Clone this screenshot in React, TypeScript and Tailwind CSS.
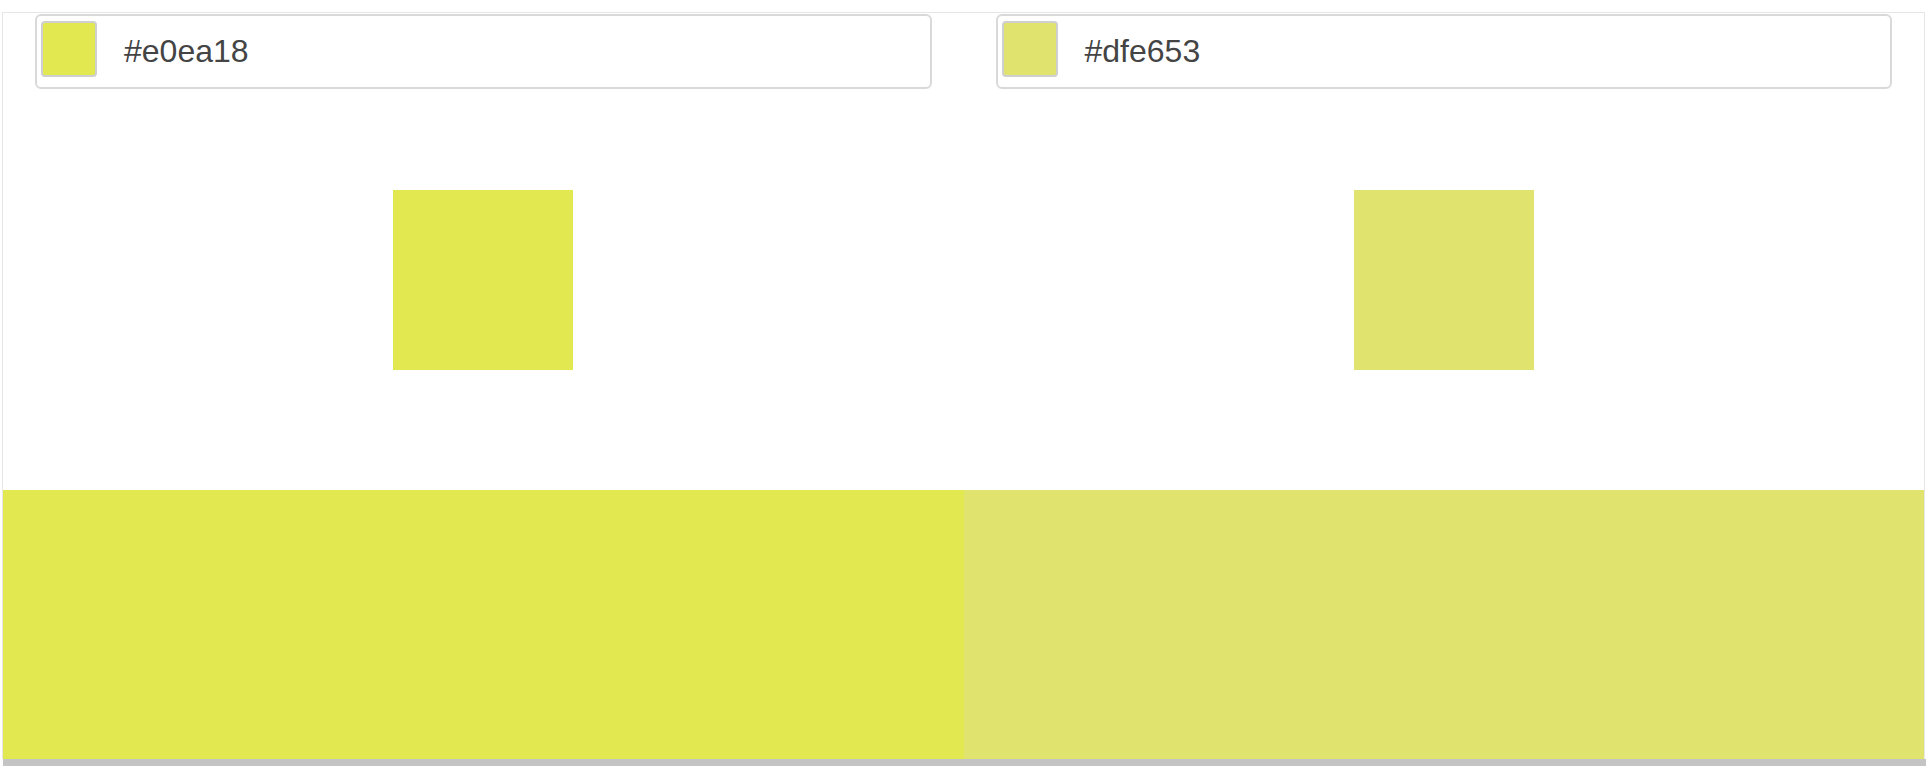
const COLORS = [
  { hex: "#e0ea18", shown: "bg-[#e2e850]" },
  { hex: "#dfe653", shown: "bg-[#e0e46e]" },
];

function ColorColumn({ hex, shown }: { hex: string; shown: string }) {
  return (
    <div className="flex flex-col">
      <div className="mx-8 mt-px h-[75px] flex items-start gap-[27px] rounded-md border-2 border-[#d9d9d9] bg-white pl-[4px] pt-[5px]">
        <div className={`size-[56px] shrink-0 rounded-[4px] border-2 border-[#cfcfcf] ${shown}`} />
        <span className="mt-[11px] text-[32px] leading-[38px] text-[#444] font-['Liberation_Sans',Arial,sans-serif]">
          {hex}
        </span>
      </div>
      <div className="mt-[101px] flex justify-center">
        <div className={`size-[180px] ${shown}`} />
      </div>
      <div className={`mt-[120px] h-[269px] ${shown}`} />
    </div>
  );
}

export default function App() {
  return (
    <div className="h-[766px] w-[1926px] overflow-hidden bg-white pt-[12px]">
      <div className="ml-[2px] w-[1923px] border border-b-0 border-[#e6e6e6]">
        <div className="grid grid-cols-2">
          {COLORS.map((c) => (
            <ColorColumn key={c.hex} hex={c.hex} shown={c.shown} />
          ))}
        </div>
      </div>
      <div className="ml-[3px] h-[7px] bg-[#c4c4c4]" />
    </div>
  );
}
